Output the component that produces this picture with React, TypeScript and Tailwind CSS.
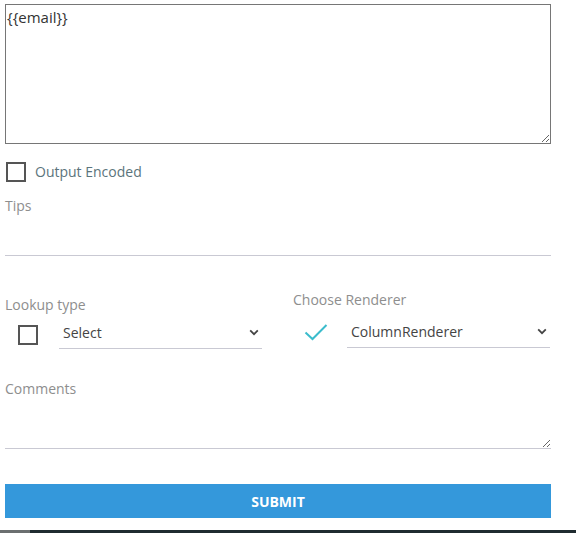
import { useState } from 'react';

const FONT = { fontFamily: '"Open Sans", "Noto Sans", sans-serif' };

function Chevron() {
  return (
    <svg width="10" height="7" viewBox="0 0 10 7" className="shrink-0">
      <path d="M1.2 1.4 L5 5.2 L8.8 1.4" fill="none" stroke="#444" strokeWidth="1.8" />
    </svg>
  );
}

function Box({ className = '' }: { className?: string }) {
  return <span className={`block h-[20px] w-[20px] shrink-0 border-2 border-[#555] ${className}`} />;
}

function SelectField({ value, className = '' }: { value: string; className?: string }) {
  return (
    <div
      className={`flex h-[32px] items-center justify-between border-b border-[#c9c9d3] pl-[4px] pr-[3px] text-[14px] text-[#444] ${className}`}
    >
      <span>{value}</span>
      <Chevron />
    </div>
  );
}

export default function App() {
  const [body, setBody] = useState('{{email}}');

  return (
    <div className="relative h-[533px] w-[576px] overflow-hidden bg-white" style={FONT}>
      <div className="ml-[5px] flex w-[546px] flex-col pt-[4px]">
        <textarea
          value={body}
          onChange={(e) => setBody(e.target.value)}
          className="h-[140px] w-full resize-y border border-[#767676] px-[1px] py-[2px] text-[15px] leading-[20px] text-[#333] outline-none"
          style={FONT}
        />

        <label className="mt-[17px] flex items-center gap-[9px] pl-[1px]">
          <Box />
          <span className="text-[14px] text-[#5b747c]">Output Encoded</span>
        </label>

        <div className="mt-[14px] text-[14px] leading-[20px] text-[#8e8e8e]">Tips</div>
        <div className="mt-[38px] h-[2px] w-full border-b border-[#c9c9d3]" />

        <div className="mt-[34px] flex">
          <div className="flex w-[288px] flex-col">
            <div className="mt-[5px] text-[14px] leading-[20px] text-[#8e8e8e]">Lookup type</div>
            <div className="mt-[2px] flex items-center">
              <Box className="ml-[13px] translate-y-[2px]" />
              <SelectField value="Select" className="ml-[21px] w-[203px]" />
            </div>
          </div>
          <div className="flex flex-1 flex-col">
            <div className="text-[14px] leading-[20px] text-[#8e8e8e]">Choose Renderer</div>
            <div className="mt-[6px] flex items-center">
              <svg width="24" height="20" viewBox="0 0 24 20" className="ml-[11px] shrink-0">
                <path d="M1.5 10.5 L8.5 17 L22.5 3" fill="none" stroke="#3bbccc" strokeWidth="2" />
              </svg>
              <SelectField value="ColumnRenderer" className="ml-[19px] w-[203px]" />
            </div>
          </div>
        </div>

        <div className="mt-[30px] text-[14px] leading-[20px] text-[#8e8e8e]">Comments</div>
        <textarea
          className="mt-[6px] h-[44px] w-full resize-y border-b border-[#c9c9d3] outline-none"
          style={FONT}
        />

        <button
          type="button"
          className="mt-[35px] h-[34px] w-full bg-[#3498db] text-[14px] font-bold text-white"
          style={FONT}
        >
          SUBMIT
        </button>
      </div>

      <div className="absolute bottom-0 left-0 flex h-[3px] w-full">
        <div className="w-[30px] bg-[#6b6f70]" />
        <div className="flex-1 bg-[#1f2b30]" />
      </div>
    </div>
  );
}
